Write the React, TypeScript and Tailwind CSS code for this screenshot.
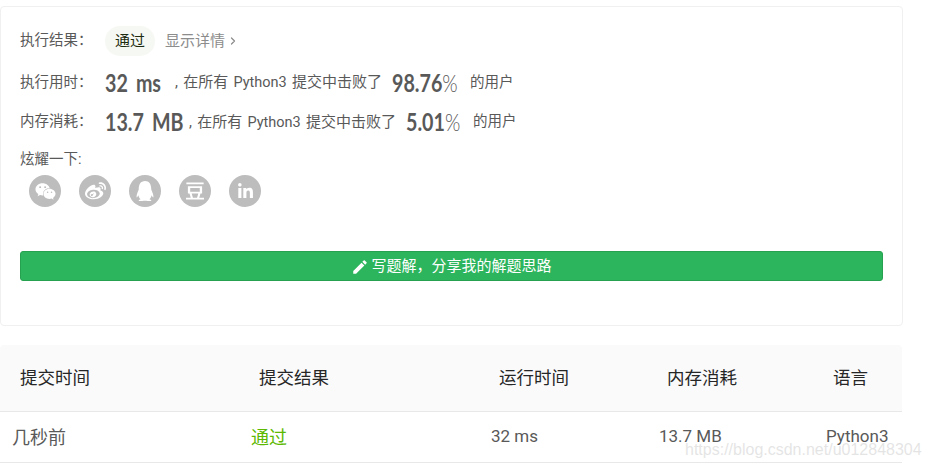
import { FaWeixin, FaWeibo, FaQq, FaLinkedinIn } from 'react-icons/fa'
import { MdEdit } from 'react-icons/md'
import { SiDouban } from 'react-icons/si'
import { ChevronRight } from 'lucide-react'

const shareIcons = [
  { key: 'wechat', icon: <FaWeixin className="size-[21px]" /> },
  { key: 'weibo', icon: <FaWeibo className="size-[21px]" /> },
  { key: 'qq', icon: <FaQq className="size-[20px]" /> },
  { key: 'douban', icon: <SiDouban className="size-[18px]" /> },
  { key: 'linkedin', icon: <FaLinkedinIn className="size-[17px]" /> },
]

// the reference's number font is a narrow DIN, so squeeze Lato to fit
function BigText({ className, children }: { className: string; children: React.ReactNode }) {
  return (
    <span className={`shrink-0 ${className}`}>
      <span className="inline-block origin-left scale-x-[0.82] font-['Lato',sans-serif] text-[24px] font-bold whitespace-nowrap text-[#595959] [word-spacing:4px]">
        {children}
      </span>
    </span>
  )
}

function StatRow({
  label,
  value,
  percent,
  valueWidth,
  percentWidth,
  className,
}: {
  label: string
  value: string
  percent: string
  valueWidth: string
  percentWidth: string
  className: string
}) {
  return (
    <div className={`flex items-center text-[15px] text-[#595959] ${className}`}>
      <span className="w-[85px] text-[14.5px]">{label}</span>
      <BigText className={valueWidth}>{value}</BigText>
      <span className="ml-[9px] [word-spacing:1.5px]">
        , 在所有 <span className="text-[14.5px]">Python3</span> 提交中击败了
      </span>
      <BigText className={`ml-[10px] ${percentWidth}`}>
        {percent}
        <span className="font-light">%</span>
      </BigText>
      <span className="ml-[12px] text-[14.5px]">的用户</span>
    </div>
  )
}

function App() {
  return (
    <div className="relative h-[469px] w-[929px] overflow-hidden bg-white font-['Roboto','Noto_Sans_CJK_SC',sans-serif]">
      <div className="pt-[6px] pr-[26px]">
        <div className="h-[320px] rounded-[4px] border border-[#f0f0f0] px-[19px] pt-[19px]">
          <div className="flex h-[30px] items-center text-[15px] text-[#595959]">
            <span className="w-[85px] text-[14.5px]">执行结果：</span>
            <span className="flex h-[30px] w-[50px] items-center justify-center rounded-full bg-[#f6f9f3] text-[#1d2b10]">
              通过
            </span>
            <span className="ml-[10px] text-[#8c8c8c]">显示详情</span>
            <ChevronRight className="ml-[2px] size-[12px] text-[#8c8c8c]" strokeWidth={2.5} />
          </div>
          <StatRow
            label="执行用时："
            value="32 ms"
            percent="98.76"
            valueWidth="w-[61px]"
            percentWidth="w-[66px]"
            className="mt-[6px] h-[41px]"
          />
          <StatRow
            label="内存消耗："
            value="13.7 MB"
            percent="5.01"
            valueWidth="w-[75px]"
            percentWidth="w-[55px]"
            className="h-[38px]"
          />
          <div className="mt-[9px] text-[14.5px] leading-[20px] text-[#595959]">炫耀一下:</div>
          <div className="mt-[5px] flex gap-[18px] pl-[9px]">
            {shareIcons.map((item) => (
              <span
                key={item.key}
                className="flex size-[32px] items-center justify-center rounded-full bg-[#bdbdbd] text-white"
              >
                {item.icon}
              </span>
            ))}
          </div>
          <button className="mt-[44px] flex h-[30px] w-[863px] items-center justify-center gap-[2px] rounded-[3px] border border-[#26a150] bg-[#2db55d] pt-[1px] text-[15px] text-white">
            <MdEdit className="size-[18px]" />
            写题解，分享我的解题思路
          </button>
        </div>
      </div>

      <div className="mt-[19px] w-[902px]">
        <div className="grid h-[67px] grid-cols-[239px_240px_168px_166px_1fr] items-center rounded-t-[4px] border-b border-[#e8e8e8] bg-[#fafafa] pl-[20px] text-[17.5px] text-[#262626]">
          <span>提交时间</span>
          <span>提交结果</span>
          <span>运行时间</span>
          <span>内存消耗</span>
          <span>语言</span>
        </div>
        <div className="grid h-[51px] grid-cols-[239px_240px_168px_167px_1fr] items-center border-b border-[#e8e8e8] pl-[12px] text-[18px] text-[#595959]">
          <span>几秒前</span>
          <span className="text-[#5cb800]">通过</span>
          <span className="text-[17px]">32 ms</span>
          <span className="text-[17px]">13.7 MB</span>
          <span className="text-[17px]">Python3</span>
        </div>
      </div>

      <span className="absolute top-[438px] left-[685px] font-['Liberation_Sans',sans-serif] text-[16px] whitespace-nowrap text-[#d9d9d9]/70">
        https://blog.csdn.net/u012848304
      </span>
    </div>
  )
}

export default App
